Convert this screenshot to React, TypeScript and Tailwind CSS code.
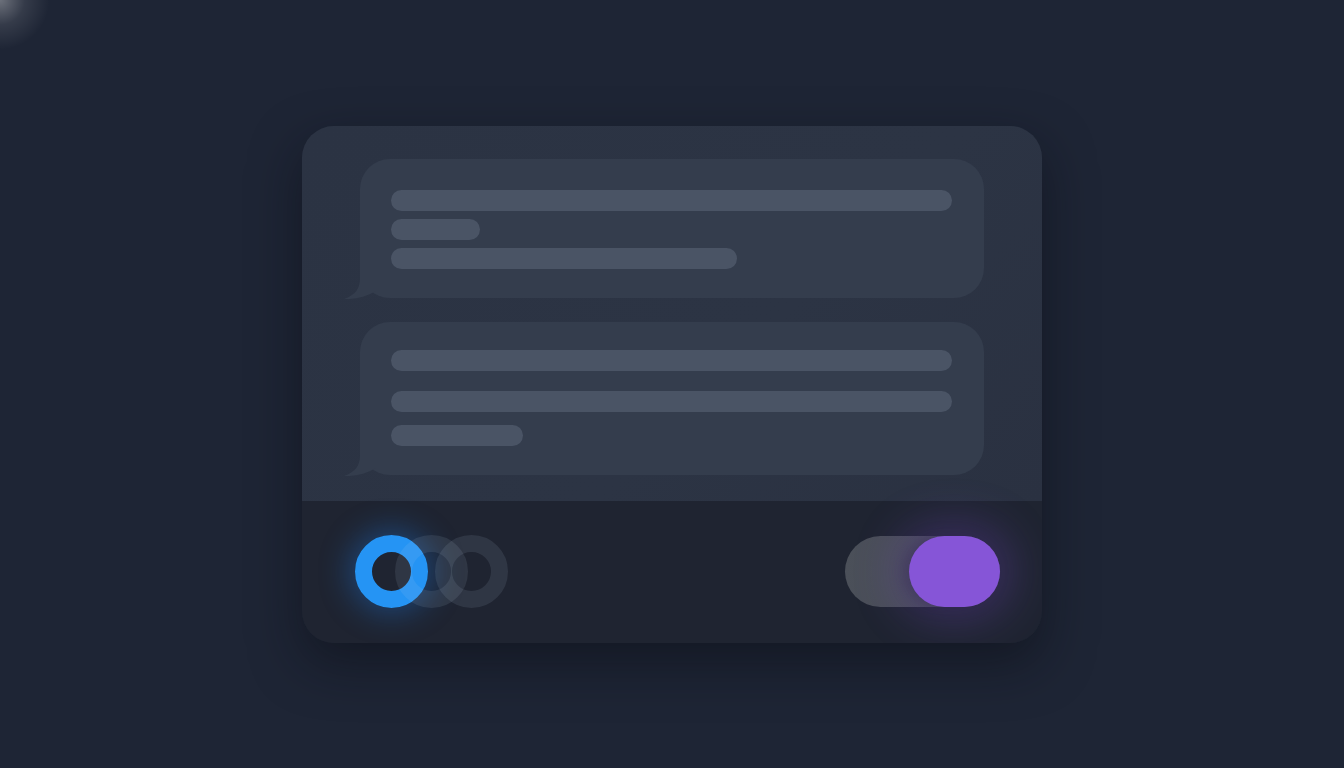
import React from "react";

function Bar({ w, className = "" }: { w: string; className?: string }) {
  return <div className={`h-[21px] rounded-full bg-[#4a5465] ${w} ${className}`} />;
}

function Tail() {
  return (
    <svg
      className="absolute left-[-16px] bottom-[-1px]"
      width="40"
      height="41"
      viewBox="0 0 40 41"
    >
      <path d="M16 0 L16 20 C16 31 11 37 0 41 C11 41.5 22 39 32 33 L32 0 Z" fill="#343d4d" />
    </svg>
  );
}

export default function App() {
  return (
    <div className="relative w-full h-[768px] overflow-hidden bg-[#1e2535] flex items-center justify-center">
      <div className="absolute left-[-50px] top-[-50px] w-[100px] h-[100px] rounded-full bg-[radial-gradient(circle,rgba(255,255,255,0.35)_0%,rgba(255,255,255,0.1)_35%,rgba(255,255,255,0)_70%)]" />
      <div className="w-[740px] h-[517px] rounded-[32px] overflow-hidden flex flex-col shadow-[0_20px_50px_rgba(10,12,20,0.5)]">
        <div className="h-[375px] bg-[linear-gradient(135deg,#2b3343_0%,#2c3444_60%,#2a3141_100%)] px-[58px] pt-[33px] flex flex-col gap-[24px]">
          <div className="relative h-[139px] rounded-[30px] bg-[#343d4d] pl-[31px] pr-[32px] pt-[31px] flex flex-col gap-[8px]">
            <Bar w="w-full" />
            <Bar w="w-[89px]" />
            <Bar w="w-[346px]" />
            <Tail />
          </div>
          <div className="relative h-[153px] rounded-[30px] bg-[#343d4d] pl-[31px] pr-[32px] pt-[28px] flex flex-col">
            <Bar w="w-full" />
            <Bar w="w-full" className="mt-[20px]" />
            <Bar w="w-[132px]" className="mt-[13px]" />
            <Tail />
          </div>
        </div>
        <div className="flex-1 bg-[#1f2431] flex items-center justify-between pl-[53px] pr-[42px]">
          <div className="flex items-center">
            <div className="w-[73px] h-[73px] rounded-full border-[17px] border-[#2594f4] shadow-[0_0_30px_6px_rgba(30,130,240,0.35)]" />
            <div className="-ml-[33px] w-[73px] h-[73px] rounded-full border-[17px] border-[rgba(200,215,240,0.1)]" />
            <div className="-ml-[33px] w-[73px] h-[73px] rounded-full border-[17px] border-[rgba(200,215,240,0.1)]" />
          </div>
          <div className="relative w-[155px] h-[71px] rounded-full bg-[linear-gradient(90deg,#4b5059_0%,#474b57_50%,#3f4350_100%)] flex justify-end">
            <div className="w-[91px] h-[71px] rounded-full bg-[#8655d7] shadow-[0_0_45px_12px_rgba(125,75,210,0.3),-6px_0_14px_rgba(20,20,35,0.35)]" />
          </div>
        </div>
      </div>
    </div>
  );
}
